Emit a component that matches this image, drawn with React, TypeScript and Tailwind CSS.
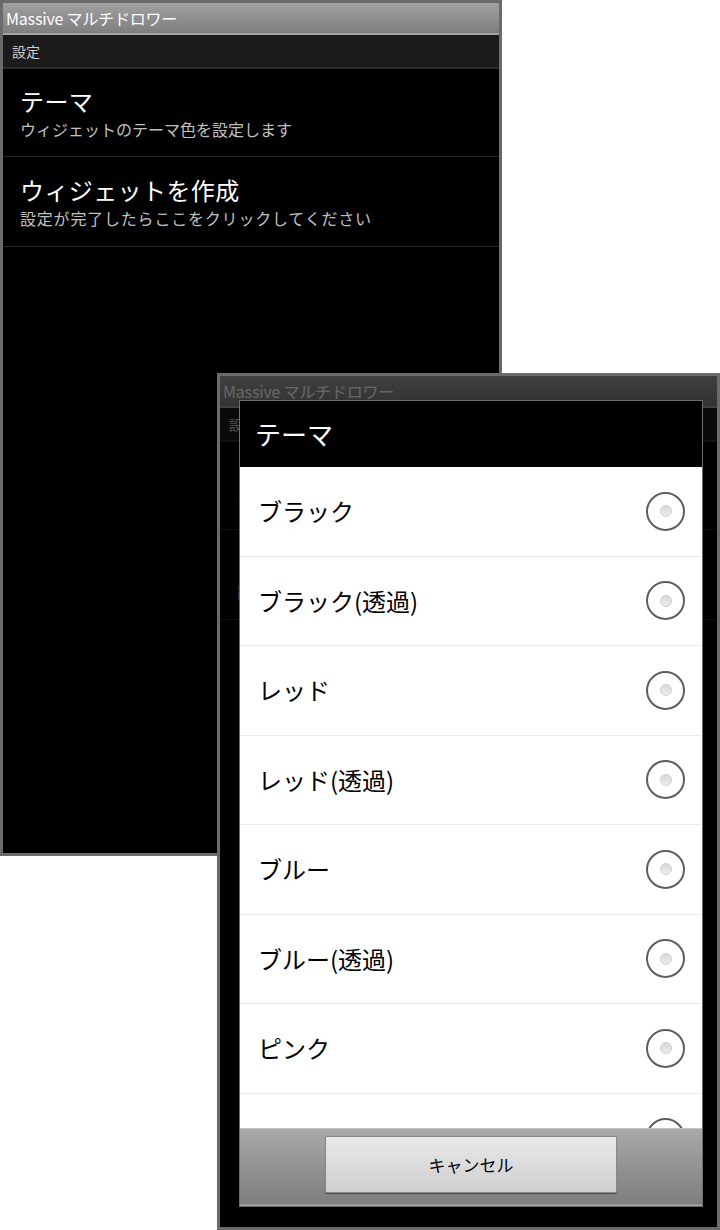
import React from "react";

const FONT = { fontFamily: '"Noto Sans CJK JP", "Noto Sans", sans-serif' };

function Screen() {
  return (
    <div className="flex flex-col w-full h-full bg-black">
      <div className="h-[30px] flex items-center pl-[3px] bg-gradient-to-b from-[#a0a0a0] to-[#7f7f7f] text-white text-[16px] leading-none tracking-[-0.2px]">
        Massive マルチドロワー
      </div>
      <div className="h-[2px] bg-[#a3a3a3]" />
      <div className="h-[32px] flex items-center pl-[9px] bg-[#1b1b1b] text-[#cfcfcf] text-[14px] leading-none">
        設定
      </div>
      <div className="h-[2px] bg-[#2c2c2c]" />
      <div className="h-[88px] flex flex-col justify-center pl-[17px] border-b border-[#262626]">
        <div className="text-white text-[24px] leading-[30px] tracking-[0.4px]">テーマ</div>
        <div className="text-[#c0c0c0] text-[16px] leading-[22px] mt-[2px]">ウィジェットのテーマ色を設定します</div>
      </div>
      <div className="h-[90px] flex flex-col justify-center pl-[17px] border-b border-[#262626]">
        <div className="text-white text-[24px] leading-[30px] tracking-[0.4px]">ウィジェットを作成</div>
        <div className="text-[#c0c0c0] text-[16px] leading-[22px] mt-[2px] tracking-[0.8px]">設定が完了したらここをクリックしてください</div>
      </div>
    </div>
  );
}

function Radio() {
  return (
    <div className="w-[39px] h-[39px] rounded-full border-2 border-[#5e5e5e] flex items-center justify-center bg-white shrink-0">
      <div className="w-[12px] h-[12px] rounded-full bg-gradient-to-b from-[#d8d8d8] to-[#ececec] border border-[#cfcfcf]" />
    </div>
  );
}

const items = ["ブラック", "ブラック(透過)", "レッド", "レッド(透過)", "ブルー", "ブルー(透過)", "ピンク", ""];

export default function App() {
  return (
    <div className="relative w-[720px] h-[1230px] bg-white overflow-hidden" style={FONT}>
      {/* Window 1 */}
      <div className="absolute left-0 top-0 w-[502px] h-[856px] border-[3px] border-[#6b6b6b] bg-black">
        <Screen />
      </div>

      {/* Window 2 */}
      <div className="absolute left-[217px] top-[373px] w-[503px] h-[857px] border-[3px] border-[#6b6b6b] bg-black">
        <div className="relative w-full h-full overflow-hidden">
          <Screen />
          <div className="absolute inset-0 bg-black/60" />
          {/* Dialog */}
          <div className="absolute left-[19px] top-[24px] w-[464px] h-[807px] border border-[#6f6f6f] flex flex-col bg-black">
            <div className="h-[66px] flex items-center pl-[15px] bg-black text-white text-[26px] leading-none">
              テーマ
            </div>
            <div className="h-[661px] bg-white overflow-hidden flex flex-col">
              {items.map((t, i) => (
                <div
                  key={i}
                  className="h-[89.5px] shrink-0 flex items-center justify-between pl-[18px] pr-[17px] border-b border-[#ececec]"
                >
                  <span className="text-black text-[24px] leading-none">{t}</span>
                  <Radio />
                </div>
              ))}
            </div>
            <div className="h-[78px] flex items-center justify-center pb-[4px] bg-gradient-to-b from-[#a9a9a9] to-[#7e7e7e] border-t border-[#c4c4c4] border-b-2 border-b-[#9a9a9a]">
              <div className="w-[292px] h-[57px] flex items-center justify-center bg-gradient-to-b from-[#e9e9e9] to-[#cfcfcf] border border-[#8a8a8a] rounded-[2px] shadow-[0_1px_1px_rgba(0,0,0,0.4)] text-black text-[17px] leading-none">
                キャンセル
              </div>
            </div>
          </div>
        </div>
      </div>
    </div>
  );
}
